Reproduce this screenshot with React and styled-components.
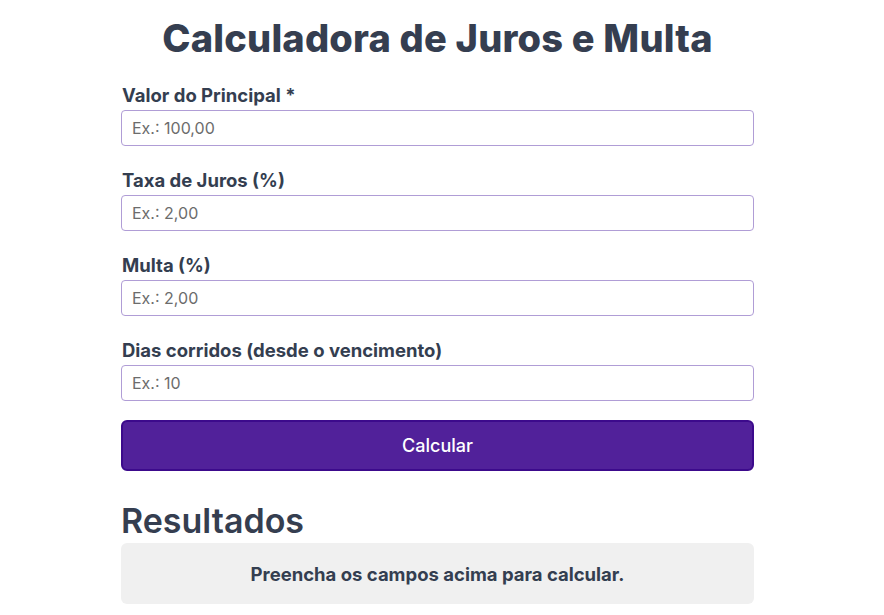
import * as React from "react"
import styled, { createGlobalStyle } from 'styled-components'

const GlobalStyle = createGlobalStyle`
body{
  margin: 0;
  background: #fff;
  font-family: Inter, "Liberation Sans", sans-serif;
  color: #343e50;
}
`

const Page = styled.div`
width: 633px;
margin: 0 auto;
padding: 14px 9px 20px 0;
`

const Title = styled.h1`
margin: 0 0 22px;
text-align: center;
font-family: Inter, sans-serif;
font-weight: 800;
font-size: 38px;
line-height: 48px;
letter-spacing: 0.2px;
color: #353e50;
`

const Field = styled.div`
display: flex;
flex-direction: column;

& + &{
  margin-top: 23px;
}
`

const Label = styled.label`
font-size: 18.5px;
font-weight: 700;
line-height: 22px;
margin-bottom: 4px;
margin-left: 1px;
color: #343e50;
`

const Input = styled.input`
box-sizing: border-box;
height: 36px;
width: 100%;
padding: 0 10px;
border: 1px solid #b09dd6;
border-radius: 4px;
font-family: Inter, sans-serif;
font-size: 16px;
color: #333;
outline: none;

&::placeholder{
  color: #6c6c6c;
}
`

const Button = styled.button`
box-sizing: border-box;
width: 100%;
height: 51px;
margin-top: 19px;
background-color: #51219a;
border: 2px solid #3c0a8c;
border-radius: 6px;
color: #fff;
font-family: Inter, sans-serif;
font-size: 18px;
font-weight: 500;
cursor: pointer;
`

const SubTitle = styled.h2`
margin: 30px 0 2px;
font-family: Inter, sans-serif;
font-weight: 600;
font-size: 34px;
line-height: 40px;
color: #353e50;
`

const ResultBox = styled.div`
background-color: #f0f0f0;
border-radius: 6px;
height: 61px;
display: flex;
align-items: center;
justify-content: center;
font-size: 18.5px;
font-weight: 700;
color: #343e50;
`

const fields = [
  { label: 'Valor do Principal *', placeholder: 'Ex.: 100,00' },
  { label: 'Taxa de Juros (%)', placeholder: 'Ex.: 2,00' },
  { label: 'Multa (%)', placeholder: 'Ex.: 2,00' },
  { label: 'Dias corridos (desde o vencimento)', placeholder: 'Ex.: 10' },
]

const App = () => {
  return (
    <Page>
      <GlobalStyle />
      <Title>Calculadora de Juros e Multa</Title>
      {fields.map((f) => (
        <Field key={f.label}>
          <Label>{f.label}</Label>
          <Input placeholder={f.placeholder} />
        </Field>
      ))}
      <Button>Calcular</Button>
      <SubTitle>Resultados</SubTitle>
      <ResultBox>Preencha os campos acima para calcular.</ResultBox>
    </Page>
  )
}

export default App
